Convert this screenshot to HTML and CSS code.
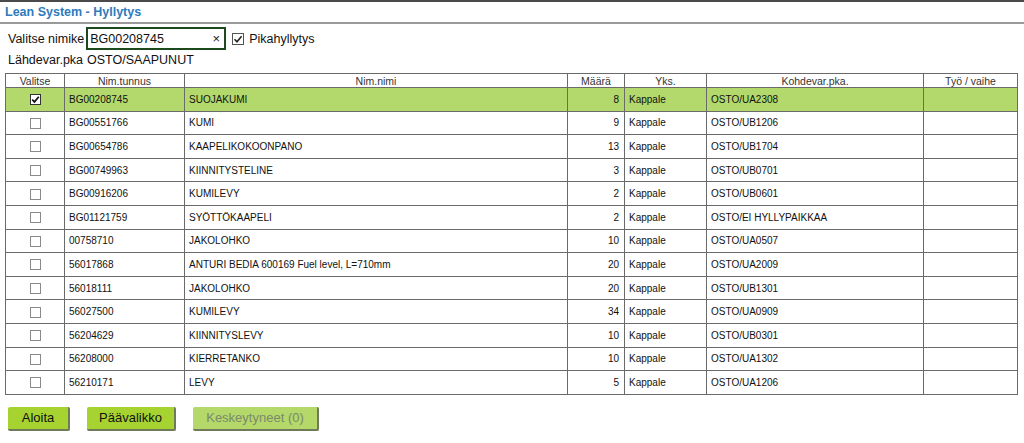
FILE: index.html
```html
<!DOCTYPE html>
<html>
<head>
<meta charset="utf-8">
<title>Lean System - Hyllytys</title>
<link rel="stylesheet" href="styles.css">
</head>
<body>
<header class="titlebar"><h1 class="title">Lean System - Hyllytys</h1></header>
<div class="content">
  <div class="filter">
    <label class="lbl">Valitse nimike</label>
    <div class="inputbox"><span class="inputval">BG00208745</span><span class="clear">×</span></div>
    <span class="cb cb-lg"><svg viewBox="0 0 12 12" width="12" height="12"><path d="M2.5 6.2 L5 8.7 L9.6 3.2" fill="none" stroke="#222" stroke-width="1.6"/></svg></span>
    <span class="lbl">Pikahyllytys</span>
  </div>
  <div class="source"><span>Lähdevar.pka</span><span>OSTO/SAAPUNUT</span></div>
  <table class="grid">
    <colgroup>
      <col class="c1"><col class="c2"><col class="c3"><col class="c4"><col class="c5"><col class="c6"><col class="c7">
    </colgroup>
    <thead>
      <tr><th>Valitse</th><th>Nim.tunnus</th><th>Nim.nimi</th><th>Määrä</th><th>Yks.</th><th>Kohdevar.pka.</th><th>Työ / vaihe</th></tr>
    </thead>
    <tbody>
      <tr class="sel"><td class="chk"><span class="cb cb-on"><svg viewBox="0 0 11 11" width="11" height="11"><path d="M2.2 5.6 L4.5 7.9 L8.8 2.8" fill="none" stroke="#111" stroke-width="1.7"/></svg></span></td><td>BG00208745</td><td>SUOJAKUMI</td><td class="num">8</td><td>Kappale</td><td>OSTO/UA2308</td><td></td></tr>
      <tr><td class="chk"><span class="cb"></span></td><td>BG00551766</td><td>KUMI</td><td class="num">9</td><td>Kappale</td><td>OSTO/UB1206</td><td></td></tr>
      <tr><td class="chk"><span class="cb"></span></td><td>BG00654786</td><td>KAAPELIKOKOONPANO</td><td class="num">13</td><td>Kappale</td><td>OSTO/UB1704</td><td></td></tr>
      <tr><td class="chk"><span class="cb"></span></td><td>BG00749963</td><td>KIINNITYSTELINE</td><td class="num">3</td><td>Kappale</td><td>OSTO/UB0701</td><td></td></tr>
      <tr><td class="chk"><span class="cb"></span></td><td>BG00916206</td><td>KUMILEVY</td><td class="num">2</td><td>Kappale</td><td>OSTO/UB0601</td><td></td></tr>
      <tr><td class="chk"><span class="cb"></span></td><td>BG01121759</td><td>SYÖTTÖKAAPELI</td><td class="num">2</td><td>Kappale</td><td>OSTO/EI HYLLYPAIKKAA</td><td></td></tr>
      <tr><td class="chk"><span class="cb"></span></td><td>00758710</td><td>JAKOLOHKO</td><td class="num">10</td><td>Kappale</td><td>OSTO/UA0507</td><td></td></tr>
      <tr><td class="chk"><span class="cb"></span></td><td>56017868</td><td>ANTURI BEDIA 600169 Fuel level, L=710mm</td><td class="num">20</td><td>Kappale</td><td>OSTO/UA2009</td><td></td></tr>
      <tr><td class="chk"><span class="cb"></span></td><td>56018111</td><td>JAKOLOHKO</td><td class="num">20</td><td>Kappale</td><td>OSTO/UB1301</td><td></td></tr>
      <tr><td class="chk"><span class="cb"></span></td><td>56027500</td><td>KUMILEVY</td><td class="num">34</td><td>Kappale</td><td>OSTO/UA0909</td><td></td></tr>
      <tr><td class="chk"><span class="cb"></span></td><td>56204629</td><td>KIINNITYSLEVY</td><td class="num">10</td><td>Kappale</td><td>OSTO/UB0301</td><td></td></tr>
      <tr><td class="chk"><span class="cb"></span></td><td>56208000</td><td>KIERRETANKO</td><td class="num">10</td><td>Kappale</td><td>OSTO/UA1302</td><td></td></tr>
      <tr><td class="chk"><span class="cb"></span></td><td>56210171</td><td>LEVY</td><td class="num">5</td><td>Kappale</td><td>OSTO/UA1206</td><td></td></tr>
    </tbody>
  </table>
  <div class="buttons">
    <button class="btn">Aloita</button>
    <button class="btn">Päävalikko</button>
    <button class="btn btn-dis">Keskeytyneet (0)</button>
  </div>
</div>
</body>
</html>
```
FILE: styles.css
```css
html, body { margin: 0; padding: 0; background: #fff; }
body { font-family: "Liberation Sans", Arial, sans-serif; color: #111; }

.titlebar {
  border-top: 2px solid #4a4a4a;
  border-bottom: 2px solid #9a9a9a;
  height: 20px;
  display: flex;
  align-items: center;
  padding-left: 5px;
}
.title {
  margin: 0;
  font-size: 12.5px;
  font-weight: bold;
  color: #2f7bbd;
}

.content { padding: 3px 7px 0 5px; }

.filter {
  display: flex;
  align-items: center;
  height: 23px;
  padding-left: 3px;
}
.lbl { font-size: 12.5px; color: #111; }
.inputbox {
  margin-left: 2px;
  width: 130px;
  height: 19px;
  border: 2px solid #1d4a1d;
  display: flex;
  align-items: center;
  justify-content: space-between;
  padding: 0 4px 0 2px;
  box-sizing: content-box;
}
.inputval { font-size: 12.5px; color: #111; }
.clear { font-size: 13px; color: #222; }

.cb {
  display: inline-flex;
  width: 9px;
  height: 9px;
  border: 1px solid #8a8a8a;
  background: #fff;
  align-items: center;
  justify-content: center;
}
.cb svg { display: block; flex: none; }
.cb-lg {
  width: 10px; height: 10px;
  border-color: #555;
  margin: 0 5px 0 6px;
}
.cb-on { border-color: #333; }

.source {
  display: flex;
  gap: 4px;
  font-size: 12.5px;
  height: 20px;
  align-items: center;
  padding-left: 3px;
  margin-bottom: 3px;
}

.grid {
  border-collapse: collapse;
  table-layout: fixed;
  width: 1012px;
  font-size: 10px;
  border: 1px solid #5e5e5e;
}
.c1 { width: 59px; } .c2 { width: 120px; } .c3 { width: 383px; } .c4 { width: 57px; }
.c5 { width: 82px; } .c6 { width: 217px; } .c7 { width: 94px; }
.grid th, .grid td { border: 1px solid #6a6a6a; padding: 0 4px; white-space: nowrap; overflow: hidden; }
.grid th {
  font-weight: normal;
  color: #333;
  height: 13px;
  font-size: 10.5px;
  text-align: center;
  background: #fff;
}
.grid tbody tr { height: 23.6px; }
.grid td { color: #111; }
.grid tr.sel td { background: #b3d96c; }
.grid td.chk { text-align: center; }
.grid td.chk .cb { vertical-align: middle; }
.grid td.num { text-align: right; padding-right: 5px; }

.buttons {
  display: flex;
  gap: 17px;
  margin-top: 12px;
  padding-left: 3px;
}
.btn {
  font-family: "Liberation Sans", Arial, sans-serif;
  font-size: 13px;
  color: #111;
  height: 24px;
  padding: 0 10px;
  background: #a6d330;
  border: none;
  border-right: 2px solid #6f7a5a;
  border-bottom: 2px solid #6f7a5a;
  border-radius: 2px;
}
.btn:nth-child(1) { width: 62px; }
.btn:nth-child(2) { width: 89px; }
.btn:nth-child(3) { width: 126px; }
.btn-dis { background: #b4d86a; color: #7a8a6a; }
```
